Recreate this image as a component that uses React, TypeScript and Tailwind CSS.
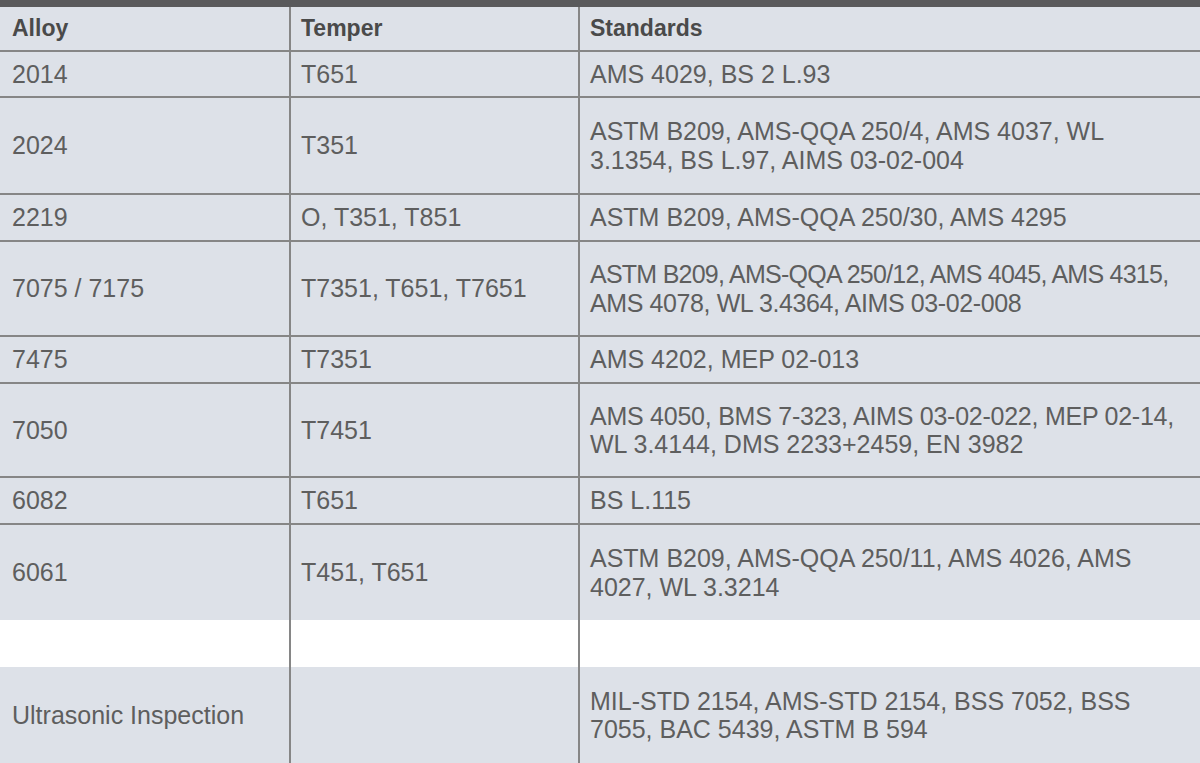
type Line = { text: string; tight?: string };

type Row = {
  alloy: string;
  temper: string;
  std: Line[];
  h: string;
  last?: boolean;
};

const rows: Row[] = [
  { alloy: "2014", temper: "T651", std: [{ text: "AMS 4029, BS 2 L.93" }], h: "h-[46px]" },
  {
    alloy: "2024",
    temper: "T351",
    std: [{ text: "ASTM B209, AMS-QQA 250/4, AMS 4037, WL" }, { text: "3.1354, BS L.97, AIMS 03-02-004" }],
    h: "h-[97px]",
  },
  { alloy: "2219", temper: "O, T351, T851", std: [{ text: "ASTM B209, AMS-QQA 250/30, AMS 4295" }], h: "h-[47px]" },
  {
    alloy: "7075 / 7175",
    temper: "T7351, T651, T7651",
    std: [
      { text: "ASTM B209, AMS-QQA 250/12, AMS 4045, AMS 4315,", tight: "tracking-[-0.75px]" },
      { text: "AMS 4078, WL 3.4364, AIMS 03-02-008", tight: "tracking-[-0.4px]" },
    ],
    h: "h-[95px]",
  },
  { alloy: "7475", temper: "T7351", std: [{ text: "AMS 4202, MEP 02-013" }], h: "h-[47px]" },
  {
    alloy: "7050",
    temper: "T7451",
    std: [
      { text: "AMS 4050, BMS 7-323, AIMS 03-02-022, MEP 02-14,", tight: "tracking-[-0.25px]" },
      { text: "WL 3.4144, DMS 2233+2459, EN 3982" },
    ],
    h: "h-[94px]",
  },
  { alloy: "6082", temper: "T651", std: [{ text: "BS L.115" }], h: "h-[47px]" },
  {
    alloy: "6061",
    temper: "T451, T651",
    std: [{ text: "ASTM B209, AMS-QQA 250/11, AMS 4026, AMS" }, { text: "4027, WL 3.3214" }],
    h: "h-[95px]",
    last: true,
  },
];

const cell = "flex items-center border-r-2 border-[#868686]";

const TableRow = ({ row }: { row: Row }) => (
  <div
    className={`grid grid-cols-[291px_289px_1fr] ${row.h} ${
      row.last ? "" : "border-b-2 border-[#868686]"
    } bg-[#dde1e8]`}
  >
    <div className={`${cell} pl-3`}>{row.alloy}</div>
    <div className={`${cell} pl-[10px]`}>{row.temper}</div>
    <div className="flex flex-col justify-center pl-[10px]">
      {row.std.map((line) => (
        <span key={line.text} className={`block whitespace-nowrap ${line.tight ?? ""}`}>
          {line.text}
        </span>
      ))}
    </div>
  </div>
);

export default function App() {
  return (
    <div
      className="w-[1200px] h-[763px] overflow-hidden bg-white text-[25px] leading-[28.5px] text-[#5e5e5e]"
      style={{ fontFamily: '"Liberation Sans", Arial, sans-serif' }}
    >
      <div className="h-[7px] bg-[#5a5a5c]" />

      {/* header */}
      <div className="grid grid-cols-[291px_289px_1fr] h-[45px] border-b-2 border-[#868686] bg-[#dde1e8] text-[23px] font-bold text-[#4a4a4a]">
        <div className={`${cell} pl-3`}>Alloy</div>
        <div className={`${cell} pl-[10px]`}>Temper</div>
        <div className="flex items-center pl-[10px]">Standards</div>
      </div>

      {rows.map((row) => (
        <TableRow key={row.alloy} row={row} />
      ))}

      {/* spacer row */}
      <div className="grid grid-cols-[291px_289px_1fr] h-[47px] bg-white">
        <div className={cell} />
        <div className={cell} />
        <div />
      </div>

      <div className="grid grid-cols-[291px_289px_1fr] h-[96px] bg-[#dde1e8]">
        <div className={`${cell} pl-3`}>Ultrasonic Inspection</div>
        <div className={cell} />
        <div className="flex flex-col justify-center pl-[10px]">
          <span className="block whitespace-nowrap">MIL-STD 2154, AMS-STD 2154, BSS 7052, BSS</span>
          <span className="block whitespace-nowrap">7055, BAC 5439, ASTM B 594</span>
        </div>
      </div>
    </div>
  );
}
